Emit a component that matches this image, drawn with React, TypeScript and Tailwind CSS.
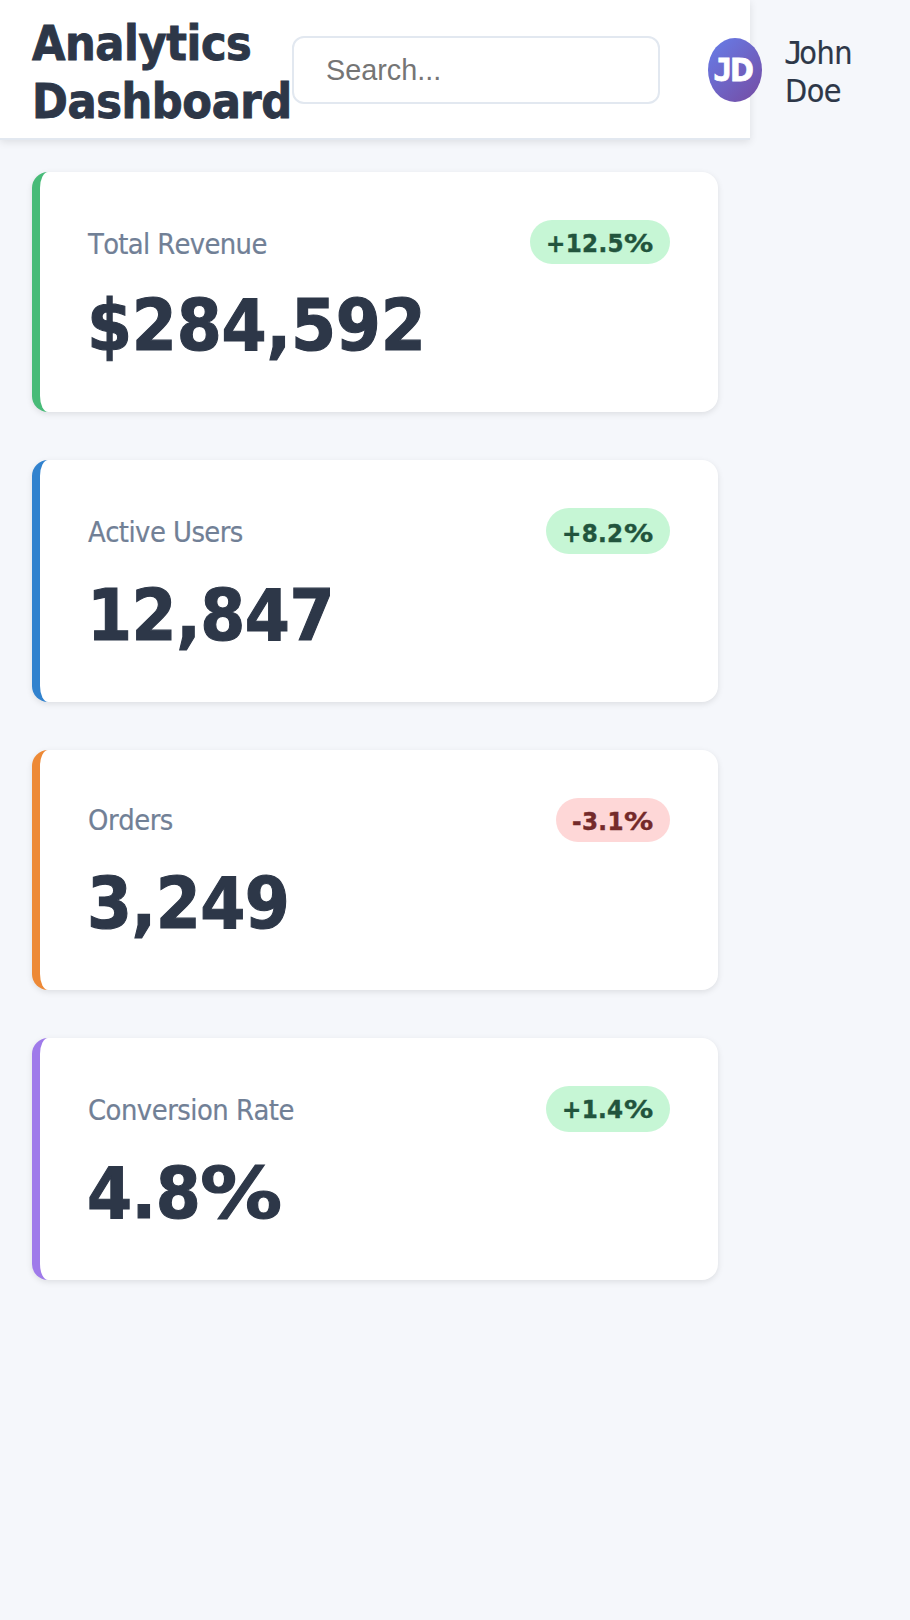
type Stat = {
  label: string;
  value: string;
  percent?: boolean;
  delta: string;
  card: string;
  badge: string;
  labelStyle: string;
  badgePad: string;
  valueStyle: string;
};

const stats: Stat[] = [
  {
    label: 'Total Revenue',
    value: '$284,592',
    delta: '+12.5',
    card: 'h-[240px] mb-12 border-[#48bb78]',
    badge: 'h-11 w-[140px] bg-[#c6f6d5] text-[#22543d]',
    labelStyle: 'pt-[2px] tracking-[-0.65px]',
    badgePad: 'pt-[1px]',
    valueStyle: 'pt-[61px] tracking-[-0.2px]',
  },
  {
    label: 'Active Users',
    value: '12,847',
    delta: '+8.2',
    card: 'h-[242px] mb-12 border-[#3182ce]',
    badge: 'h-[46px] w-[124px] bg-[#c6f6d5] text-[#22543d]',
    labelStyle: 'pt-[2px] tracking-[-0.55px]',
    badgePad: 'pt-[3px]',
    valueStyle: 'pt-[63px] tracking-[-0.5px]',
  },
  {
    label: 'Orders',
    value: '3,249',
    delta: '-3.1',
    card: 'h-[240px] mb-12 border-[#ed8936]',
    badge: 'h-11 w-[114px] bg-[#fed7d7] text-[#742a2a]',
    labelStyle: 'pt-0 tracking-[-0.45px]',
    badgePad: 'pt-[1px]',
    valueStyle: 'pt-[61px] tracking-[-0.5px]',
  },
  {
    label: 'Conversion Rate',
    value: '4.8',
    percent: true,
    delta: '+1.4',
    card: 'h-[242px] border-[#9f7aea]',
    badge: 'h-[46px] w-[124px] bg-[#c6f6d5] text-[#22543d]',
    labelStyle: 'pt-[2px] tracking-[-0.5px]',
    badgePad: 'pt-[1px]',
    valueStyle: 'pt-[63px] tracking-[-0.5px]',
  },
];

function Percent() {
  return (
    <span className="inline-block origin-left scale-x-[1.14] font-['DejaVu_Sans',sans-serif] tracking-normal">%</span>
  );
}

function StatCard({ stat }: { stat: Stat }) {
  return (
    <section
      className={`flex rounded-2xl border-l-8 bg-white px-12 pt-12 shadow-[0_2px_6px_rgba(0,0,0,0.1)] ${stat.card}`}
    >
      <div className="flex-1 whitespace-nowrap">
        <div className="flex h-0 flex-col">
          <p
            className={`text-[28.8px] leading-[44px] text-[#718096] [font-kerning:none] [-webkit-text-stroke:0.2px_#718096] ${stat.labelStyle}`}
          >
            {stat.label}
          </p>
        </div>
        <p
          className={`-ml-px text-[72px] leading-[88px] font-bold text-[#2d3748] [-webkit-text-stroke:1.1px_#2d3748] ${stat.valueStyle}`}
        >
          {stat.value}
          {stat.percent && <Percent />}
        </p>
      </div>
      <div
        className={`rounded-full pl-4 text-[25.6px] leading-[44px] font-bold tracking-[0.35px] whitespace-nowrap [-webkit-text-stroke:0.4px_currentColor] ${stat.badge} ${stat.badgePad}`}
      >
        {stat.delta}
        <Percent />
      </div>
    </section>
  );
}

export default function App() {
  return (
    <div className="min-h-[1620px] w-[910px] bg-[#f5f7fb] font-['DejaVu_Sans_Condensed','DejaVu_Sans',sans-serif] text-[#2d3748]">
      <header className="flex h-[140px] w-[750px] items-start border-b-2 border-[#e2e8f0] bg-white pl-8 shadow-[0_2px_8px_rgba(0,0,0,0.1)]">
        <h1 className="w-[260px] shrink-0 pt-[14px] text-[48px] leading-[58px] font-bold tracking-[-0.4px] [-webkit-text-stroke:0.9px_#2d3748]">
          Analytics Dashboard
        </h1>
        <input
          type="text"
          placeholder="Search..."
          className="mt-9 h-[68px] w-[368px] shrink-0 rounded-xl border-2 border-[#e2e8f0] bg-white px-8 font-['Liberation_Sans',sans-serif] text-[28.8px] placeholder:text-[#757575] placeholder:opacity-100"
        />
        <div className="mt-[38px] ml-12 flex h-16 w-[54px] shrink-0 justify-center rounded-[50%] bg-[linear-gradient(135deg,#667eea,#764ba2)] pr-[3px] text-[32px] leading-[64px] font-bold text-white [-webkit-text-stroke:0.8px_white]">
          <span className="font-['DejaVu_Sans_Mono',monospace] tracking-[-2.5px]">J</span>
          <span>D</span>
        </div>
        <div className="mt-[34px] ml-[22px] w-[80px] shrink-0 text-[32px] leading-[38px] tracking-[-0.5px] [-webkit-text-stroke:0.2px_#2d3748]">
          <div className="flex">
            <span className="font-['DejaVu_Sans_Mono',monospace] tracking-[-4px]">J</span>
            <span>ohn</span>
          </div>
          <div className="pl-px">Doe</div>
        </div>
      </header>
      <main className="w-[750px] px-8 pt-8">
        {stats.map((stat) => (
          <StatCard key={stat.label} stat={stat} />
        ))}
      </main>
    </div>
  );
}
